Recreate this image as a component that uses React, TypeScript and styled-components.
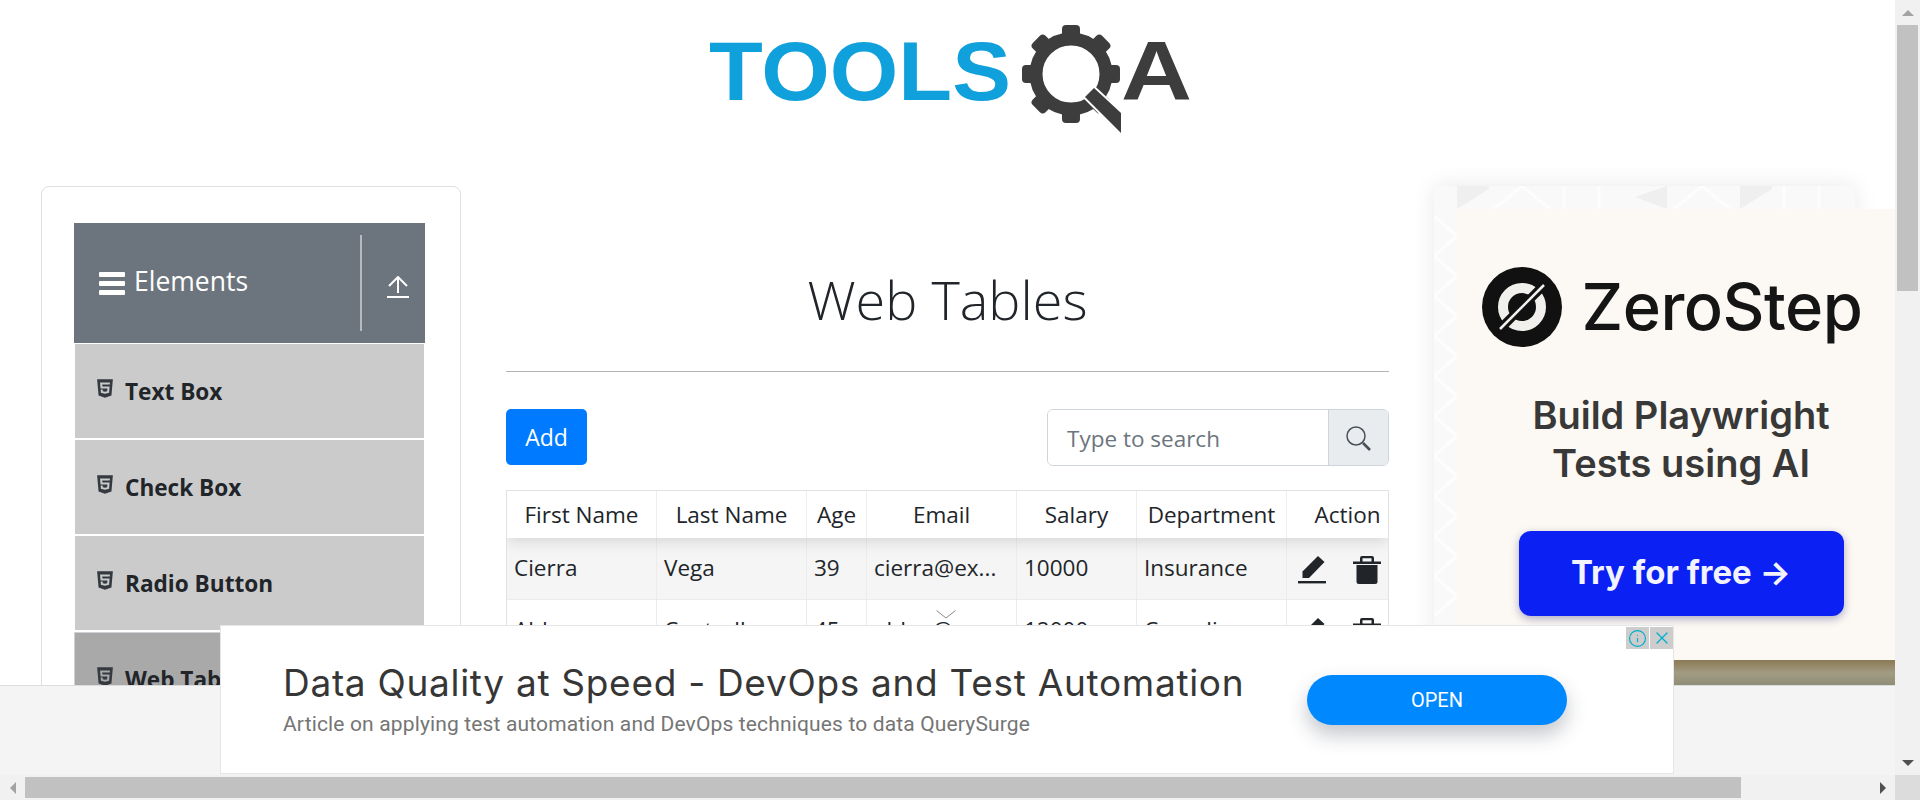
import React from 'react';
import styled, { createGlobalStyle } from 'styled-components';
import { FaHtml5 } from 'react-icons/fa';
import { Info, X } from 'lucide-react';

const SITE_FONT = '"Open Sans", "Noto Sans", sans-serif';
const AD_FONT = 'Roboto, "Noto Sans", sans-serif';

const GlobalStyle = createGlobalStyle`
    html, body {
        margin: 0;
        padding: 0;
        height: 100%;
        overflow: hidden;
        background: #fff;
    }
    * {
        box-sizing: border-box;
    }
`;

const Frame = styled.div`
    display: grid;
    grid-template-columns: 1895px 25px;
    grid-template-rows: 775px 25px;
    width: 1920px;
    height: 800px;
    overflow: hidden;
    font-family: ${SITE_FONT};
    color: #212529;
`;

const Page = styled.div`
    position: relative;
    overflow: hidden;
    background: #fff;
`;

const Header = styled.header`
    display: flex;
    justify-content: center;
    height: 186px;
    padding: 20px 0 0 5px;
`;

const Content = styled.div`
    display: flex;
    align-items: flex-start;
    gap: 45px;
    padding-left: 41px;
`;

/* sidebar */
const SideCard = styled.nav`
    flex: none;
    width: 420px;
    padding: 36px 35px 36px 32px;
    border: 1px solid #dfdfdf;
    border-radius: 8px;
`;

const MenuHeader = styled.div`
    display: flex;
    align-items: center;
    height: 120px;
    padding-left: 25px;
    background: #6c757d;
    color: #fff;
`;

const MenuTitle = styled.span`
    flex: 1;
    margin: -4px 0 0 9px;
    font-size: 26.5px;
    font-weight: 400;
    line-height: 34px;
`;

const MenuDivider = styled.span`
    width: 2px;
    height: 96px;
    background: #b6babe;
`;

const MenuToggle = styled.span`
    display: flex;
    width: 63px;
    padding: 8px 0 0 25px;
`;

const MenuList = styled.ul`
    display: flex;
    flex-direction: column;
    gap: 2px;
    margin: 1px 1px 0;
    padding: 0;
    list-style: none;
`;

const MenuItem = styled.li<{ $active?: boolean }>`
    display: flex;
    align-items: center;
    gap: 11px;
    height: 94px;
    padding-left: 21px;
    margin: ${p => (p.$active ? '0 -1px' : '0')};
    background: ${p => (p.$active ? '#a9a9a9' : '#cbcbcb')};
    border: ${p => (p.$active ? '1px solid #ced2d6' : 'none')};
    font-size: 22.6px;
    font-weight: 700;
    svg {
        flex: none;
        width: 18px;
        height: 21px;
        margin-top: -5px;
        color: #343a40;
    }
`;

/* centre column */
const Main = styled.main`
    flex: none;
    width: 883px;
`;

const Title = styled.h1`
    margin: 77px 0 36px;
    font-size: 54px;
    font-weight: 300;
    line-height: 72px;
    text-align: center;
`;

const Rule = styled.hr`
    height: 1px;
    margin: 0 0 37px;
    border: 0;
    background: #b5b5b5;
`;

const Toolbar = styled.div`
    display: flex;
    justify-content: space-between;
    align-items: flex-start;
    height: 57px;
    margin-bottom: 24px;
`;

const AddButton = styled.button`
    width: 81px;
    height: 56px;
    padding: 0;
    border: 0;
    border-radius: 5px;
    background: #007bff;
    color: #fff;
    font-family: inherit;
    font-size: 23px;
`;

const SearchBox = styled.div`
    display: flex;
    width: 342px;
    height: 57px;
    overflow: hidden;
    border: 1px solid #ced4da;
    border-radius: 6px;
`;

const SearchInput = styled.input`
    flex: 1;
    min-width: 0;
    padding: 2px 19px 0;
    border: 0;
    outline: none;
    font-family: inherit;
    font-size: 22.5px;
    &::placeholder {
        color: #6c757d;
        opacity: 1;
    }
`;

const SearchAddon = styled.span`
    display: flex;
    align-items: center;
    justify-content: center;
    width: 60px;
    padding-top: 2px;
    background: #e9ecef;
    border-left: 1px solid #ced4da;
`;

const Table = styled.div`
    overflow: hidden;
    border: 1px solid #e2e2e2;
    border-bottom: 0;
`;

const Row = styled.div<{ $head?: boolean; $odd?: boolean }>`
    position: relative;
    display: grid;
    grid-template-columns: 150px 150px 60px 150px 120px 150px 1fr;
    height: ${p => (p.$head ? '47px' : '62px')};
    background: ${p => (p.$odd ? '#f5f5f5' : '#fff')};
    border-bottom: ${p => (p.$head ? 'none' : '1px solid #ececec')};
    box-shadow: ${p => (p.$head ? '0 2px 15px rgba(0, 0, 0, .15)' : 'none')};
    z-index: ${p => (p.$head ? 1 : 0)};
    font-size: 22.5px;
`;

const HeadCell = styled.div`
    overflow: hidden;
    line-height: 48px;
    text-align: center;
    white-space: nowrap;
    background: #fff;
    border-right: 1px solid #eeeeee;
    &:last-child {
        padding-left: 20px;
        border-right: 0;
    }
`;

const Cell = styled.div`
    overflow: hidden;
    padding: 0 7px;
    line-height: 60px;
    white-space: nowrap;
    border-right: 1px solid #ececec;
    &:last-child {
        border-right: 0;
    }
`;

const ActionCell = styled.div`
    display: flex;
    align-items: center;
    gap: 27px;
    padding: 3px 0 0 11px;
`;

/* right advert */
const Promo = styled.aside`
    position: relative;
    flex: none;
    width: 461px;
    padding: 23px 0 0 23px;
`;

const PromoBackdrop = styled.svg`
    position: absolute;
    top: 0;
    left: 0;
    box-shadow: 0 0 22px rgba(0, 0, 0, .09);
`;

const PromoCard = styled.div`
    position: relative;
    display: flex;
    flex-direction: column;
    align-items: center;
    height: 451px;
    padding: 58px 0 0 10px;
    background: #fcf8f3;
`;

const PromoBrand = styled.div`
    display: flex;
    align-items: center;
    gap: 20px;
    height: 80px;
    margin-right: 18px;
`;

const BrandName = styled.span`
    font-family: Inter, sans-serif;
    font-size: 65px;
    font-weight: 500;
    line-height: 80px;
    letter-spacing: -.5px;
    color: #151515;
`;

const PromoText = styled.div`
    margin-top: 44px;
    font-family: Inter, sans-serif;
    font-size: 38px;
    font-weight: 600;
    line-height: 48px;
    text-align: center;
    color: #383838;
`;

const PromoButton = styled.div`
    display: flex;
    align-items: center;
    justify-content: center;
    width: 325px;
    height: 85px;
    margin-top: 44px;
    padding-bottom: 4px;
    border-radius: 12px;
    background: #0b20f3;
    box-shadow: 0 3px 8px rgba(30, 30, 120, .35);
    font-family: Inter, sans-serif;
    font-size: 33px;
    font-weight: 700;
    color: #f2f3ff;
`;

const PromoPhoto = styled.div`
    position: relative;
    height: 120px;
    background: linear-gradient(180deg, #8b7a55 0, #a29c82 13px, #8f8d78 25px, #77745f 100%);
`;

/* bottom advert */
const AnchorBand = styled.div`
    position: absolute;
    left: 0;
    right: 0;
    bottom: 0;
    height: 90px;
    background: #f4f4f4;
    border-top: 1px solid #dcdcdc;
`;

const AnchorAd = styled.div`
    position: absolute;
    left: 220px;
    bottom: 1px;
    display: flex;
    align-items: center;
    width: 1454px;
    height: 149px;
    padding-left: 62px;
    background: #fff;
    border: 1px solid #e6e6e6;
    font-family: ${AD_FONT};
`;

const AdCopy = styled.div`
    width: 1024px;
`;

const AdTitle = styled.div`
    font-family: Inter, sans-serif;
    font-size: 37px;
    line-height: 44px;
    letter-spacing: .7px;
    color: #363636;
`;

const AdSub = styled.div`
    margin-top: 5px;
    font-size: 21px;
    line-height: 28px;
    letter-spacing: .15px;
    color: #757575;
`;

const AdButton = styled.div`
    display: flex;
    align-items: center;
    justify-content: center;
    width: 260px;
    height: 50px;
    border-radius: 25px;
    background: #0088ff;
    box-shadow: 0 10px 20px rgba(40, 50, 70, .28);
    font-size: 20px;
    color: #fff;
`;

const AdCollapse = styled.svg`
    position: absolute;
    top: -16px;
    left: 715px;
`;

const AdBadges = styled.div`
    position: absolute;
    top: 1px;
    right: 0;
    display: flex;
    gap: 1px;
`;

const AdBadge = styled.span`
    display: flex;
    align-items: center;
    justify-content: center;
    width: 23px;
    height: 22px;
    background: #cdcdcd;
    color: #00aecd;
`;

/* fake browser scrollbars, headless chrome hides the real ones */
const VScroll = styled.div`
    display: flex;
    flex-direction: column;
    background: #f1f1f1;
`;

const HScroll = styled.div`
    display: flex;
    align-items: center;
    background: #f1f1f1;
`;

const Corner = styled.div`
    background: #dcdcdc;
`;

const ScrollButton = styled.span`
    display: flex;
    flex: none;
    align-items: center;
    justify-content: center;
    width: 25px;
    height: 25px;
`;

const VThumb = styled.div`
    flex: none;
    height: 266px;
    margin: 0 2px;
    background: #c1c1c1;
`;

const HThumb = styled.div`
    flex: none;
    width: 1716px;
    height: 21px;
    background: #c1c1c1;
`;

const Spacer = styled.div`
    flex: 1;
`;

const Arrow = styled.i<{ $dir: 'up' | 'down' | 'left' | 'right'; $dark?: boolean }>`
    width: 0;
    height: 0;
    border-style: solid;
    border-color: transparent;
    border-width: 6px;
    ${p => {
        const color = p.$dark ? '#505050' : '#a3a3a3';
        switch (p.$dir) {
            case 'up':
                return `border-top-width: 0; border-bottom-color: ${color};`;
            case 'down':
                return `border-bottom-width: 0; border-top-color: ${color};`;
            case 'left':
                return `border-left-width: 0; border-right-color: ${color};`;
            default:
                return `border-right-width: 0; border-left-color: ${color};`;
        }
    }}
`;

const Logo = () => (
    <svg width="490" height="120" viewBox="0 0 490 120">
        <text
            x="4"
            y="80"
            textLength="302"
            lengthAdjust="spacingAndGlyphs"
            fontFamily="'Liberation Sans', sans-serif"
            fontWeight="700"
            fontSize="83"
            fill="#10a0dc"
        >
            TOOLS
        </text>
        <g fill="#3d3d3d">
            {[0, 45, 90, 135, 180, 225, 270, 315].map(a => (
                <rect key={a} x="357" y="5" width="18" height="20" rx="4" transform={`rotate(${a} 366 54)`} />
            ))}
        </g>
        <circle cx="366" cy="54" r="35" fill="none" stroke="#3d3d3d" strokeWidth="13" />
        <polygon
            points="389,68 380,77 416,113 416,93"
            fill="#3d3d3d"
            stroke="#fff"
            strokeWidth="4"
            paintOrder="stroke"
        />
        <text
            x="416"
            y="80"
            textLength="71"
            lengthAdjust="spacingAndGlyphs"
            fontFamily="'Liberation Sans', sans-serif"
            fontWeight="700"
            fontSize="83"
            fill="#3d3d3d"
        >
            A
        </text>
    </svg>
);

const BarsIcon = () => (
    <svg width="26" height="23" viewBox="0 0 26 23" fill="#fff">
        <rect y="0" width="26" height="5" rx="1" />
        <rect y="9" width="26" height="5" rx="1" />
        <rect y="18" width="26" height="5" rx="1" />
    </svg>
);

const UploadIcon = () => (
    <svg width="22" height="22" viewBox="0 0 22 22" fill="none" stroke="#fff" strokeWidth="2">
        <path d="M11 17V2M2 10l9-9 9 9" />
        <path d="M0 21h22" />
    </svg>
);

const SearchIcon = () => (
    <svg width="25" height="25" viewBox="0 0 25 25" fill="none" stroke="#495057">
        <circle cx="10" cy="10" r="9" strokeWidth="1.5" />
        <path d="M17 17l7 7" strokeWidth="2.6" />
    </svg>
);

const EditIcon = () => (
    <svg width="28" height="28" viewBox="0 0 28 28" fill="#212529">
        <path d="M4.5 22v-6.5L20 0l6.5 6L11 22z" />
        <rect y="25" width="28" height="2.4" />
    </svg>
);

const TrashIcon = () => (
    <svg width="28" height="28" viewBox="0 0 28 28" fill="#212529">
        <path d="M9 0h10a2 2 0 0 1 2 2v3.5h7V8H0V5.5h7V2a2 2 0 0 1 2-2zm.5 2.2v3.3h9V2.2z" />
        <path d="M3.5 9h21v16.5a2.5 2.5 0 0 1-2.5 2.5H6a2.5 2.5 0 0 1-2.5-2.5z" />
    </svg>
);

const ZeroStepMark = () => (
    <svg width="80" height="80" viewBox="0 0 80 80">
        <circle cx="40" cy="40" r="40" fill="#111" />
        <circle cx="40" cy="40" r="19" fill="none" stroke="#f2f0ec" strokeWidth="10" />
        <path d="M16 64L64 16" stroke="#111" strokeWidth="9" />
        <path d="M18 62L62 18" stroke="#f2f0ec" strokeWidth="2.5" />
    </svg>
);

const Backdrop = () => (
    <PromoBackdrop width="421" height="520" viewBox="0 0 421 520">
        <rect width="421" height="520" fill="#f9f9fa" />
        <g fill="none" stroke="#fff" strokeWidth="3" strokeOpacity=".7">
            <path d="M0 30L23 50 0 70 23 90 0 110 23 130 0 150 23 170 0 190 23 210 0 230 23 250 0 270 23 290 0 310 23 330 0 350 23 370 0 390 23 410 0 430" />
            <path d="M60 23L88 0 116 23M130 0V23M165 0V23M240 23L268 0 296 23M350 0V23M385 0V23" />
        </g>
        <g fill="#efefef">
            <polygon points="23,0 55,0 55,3 23,23" />
            <polygon points="233,0 201,11 233,23" />
            <polygon points="306,0 338,0 338,3 306,23" />
        </g>
    </PromoBackdrop>
);

const columns = ['First Name', 'Last Name', 'Age', 'Email', 'Salary', 'Department', 'Action'];

const people = [
    ['Cierra', 'Vega', '39', 'cierra@ex...', '10000', 'Insurance'],
    ['Alden', 'Cantrell', '45', 'alden@ex...', '12000', 'Compliance'],
];

const menu = ['Text Box', 'Check Box', 'Radio Button', 'Web Tables'];

export default function App() {
    return (
        <Frame>
            <GlobalStyle />
            <Page>
                <Header>
                    <Logo />
                </Header>
                <Content>
                    <SideCard>
                        <MenuHeader>
                            <BarsIcon />
                            <MenuTitle>Elements</MenuTitle>
                            <MenuDivider />
                            <MenuToggle>
                                <UploadIcon />
                            </MenuToggle>
                        </MenuHeader>
                        <MenuList>
                            {menu.map(label => (
                                <MenuItem key={label} $active={label === 'Web Tables'}>
                                    <FaHtml5 />
                                    {label}
                                </MenuItem>
                            ))}
                        </MenuList>
                    </SideCard>
                    <Main>
                        <Title>Web Tables</Title>
                        <Rule />
                        <Toolbar>
                            <AddButton>Add</AddButton>
                            <SearchBox>
                                <SearchInput placeholder="Type to search" readOnly />
                                <SearchAddon>
                                    <SearchIcon />
                                </SearchAddon>
                            </SearchBox>
                        </Toolbar>
                        <Table>
                            <Row $head>
                                {columns.map(c => (
                                    <HeadCell key={c}>{c}</HeadCell>
                                ))}
                            </Row>
                            {people.map((person, i) => (
                                <Row key={person[3]} $odd={i % 2 === 0}>
                                    {person.map(value => (
                                        <Cell key={value}>{value}</Cell>
                                    ))}
                                    <ActionCell>
                                        <EditIcon />
                                        <TrashIcon />
                                    </ActionCell>
                                </Row>
                            ))}
                        </Table>
                    </Main>
                    <Promo>
                        <Backdrop />
                        <PromoCard>
                            <PromoBrand>
                                <ZeroStepMark />
                                <BrandName>ZeroStep</BrandName>
                            </PromoBrand>
                            <PromoText>
                                Build Playwright
                                <br />
                                Tests using AI
                            </PromoText>
                            <PromoButton>Try for free →</PromoButton>
                        </PromoCard>
                        <PromoPhoto />
                    </Promo>
                </Content>
                <AnchorBand>
                    <AnchorAd>
                        <AdCollapse width="20" height="9" viewBox="0 0 20 9" fill="none" stroke="#888">
                            <path d="M.5.5L10 8 19.5.5" />
                        </AdCollapse>
                        <AdCopy>
                            <AdTitle>Data Quality at Speed - DevOps and Test Automation</AdTitle>
                            <AdSub>Article on applying test automation and DevOps techniques to data QuerySurge</AdSub>
                        </AdCopy>
                        <AdButton>OPEN</AdButton>
                        <AdBadges>
                            <AdBadge>
                                <Info size={19} strokeWidth={1.5} />
                            </AdBadge>
                            <AdBadge>
                                <X size={20} strokeWidth={1.5} />
                            </AdBadge>
                        </AdBadges>
                    </AnchorAd>
                </AnchorBand>
            </Page>
            <VScroll>
                <ScrollButton>
                    <Arrow $dir="up" />
                </ScrollButton>
                <VThumb />
                <Spacer />
                <ScrollButton>
                    <Arrow $dir="down" $dark />
                </ScrollButton>
            </VScroll>
            <HScroll>
                <ScrollButton>
                    <Arrow $dir="left" />
                </ScrollButton>
                <HThumb />
                <Spacer />
                <ScrollButton>
                    <Arrow $dir="right" $dark />
                </ScrollButton>
            </HScroll>
            <Corner />
        </Frame>
    );
}
